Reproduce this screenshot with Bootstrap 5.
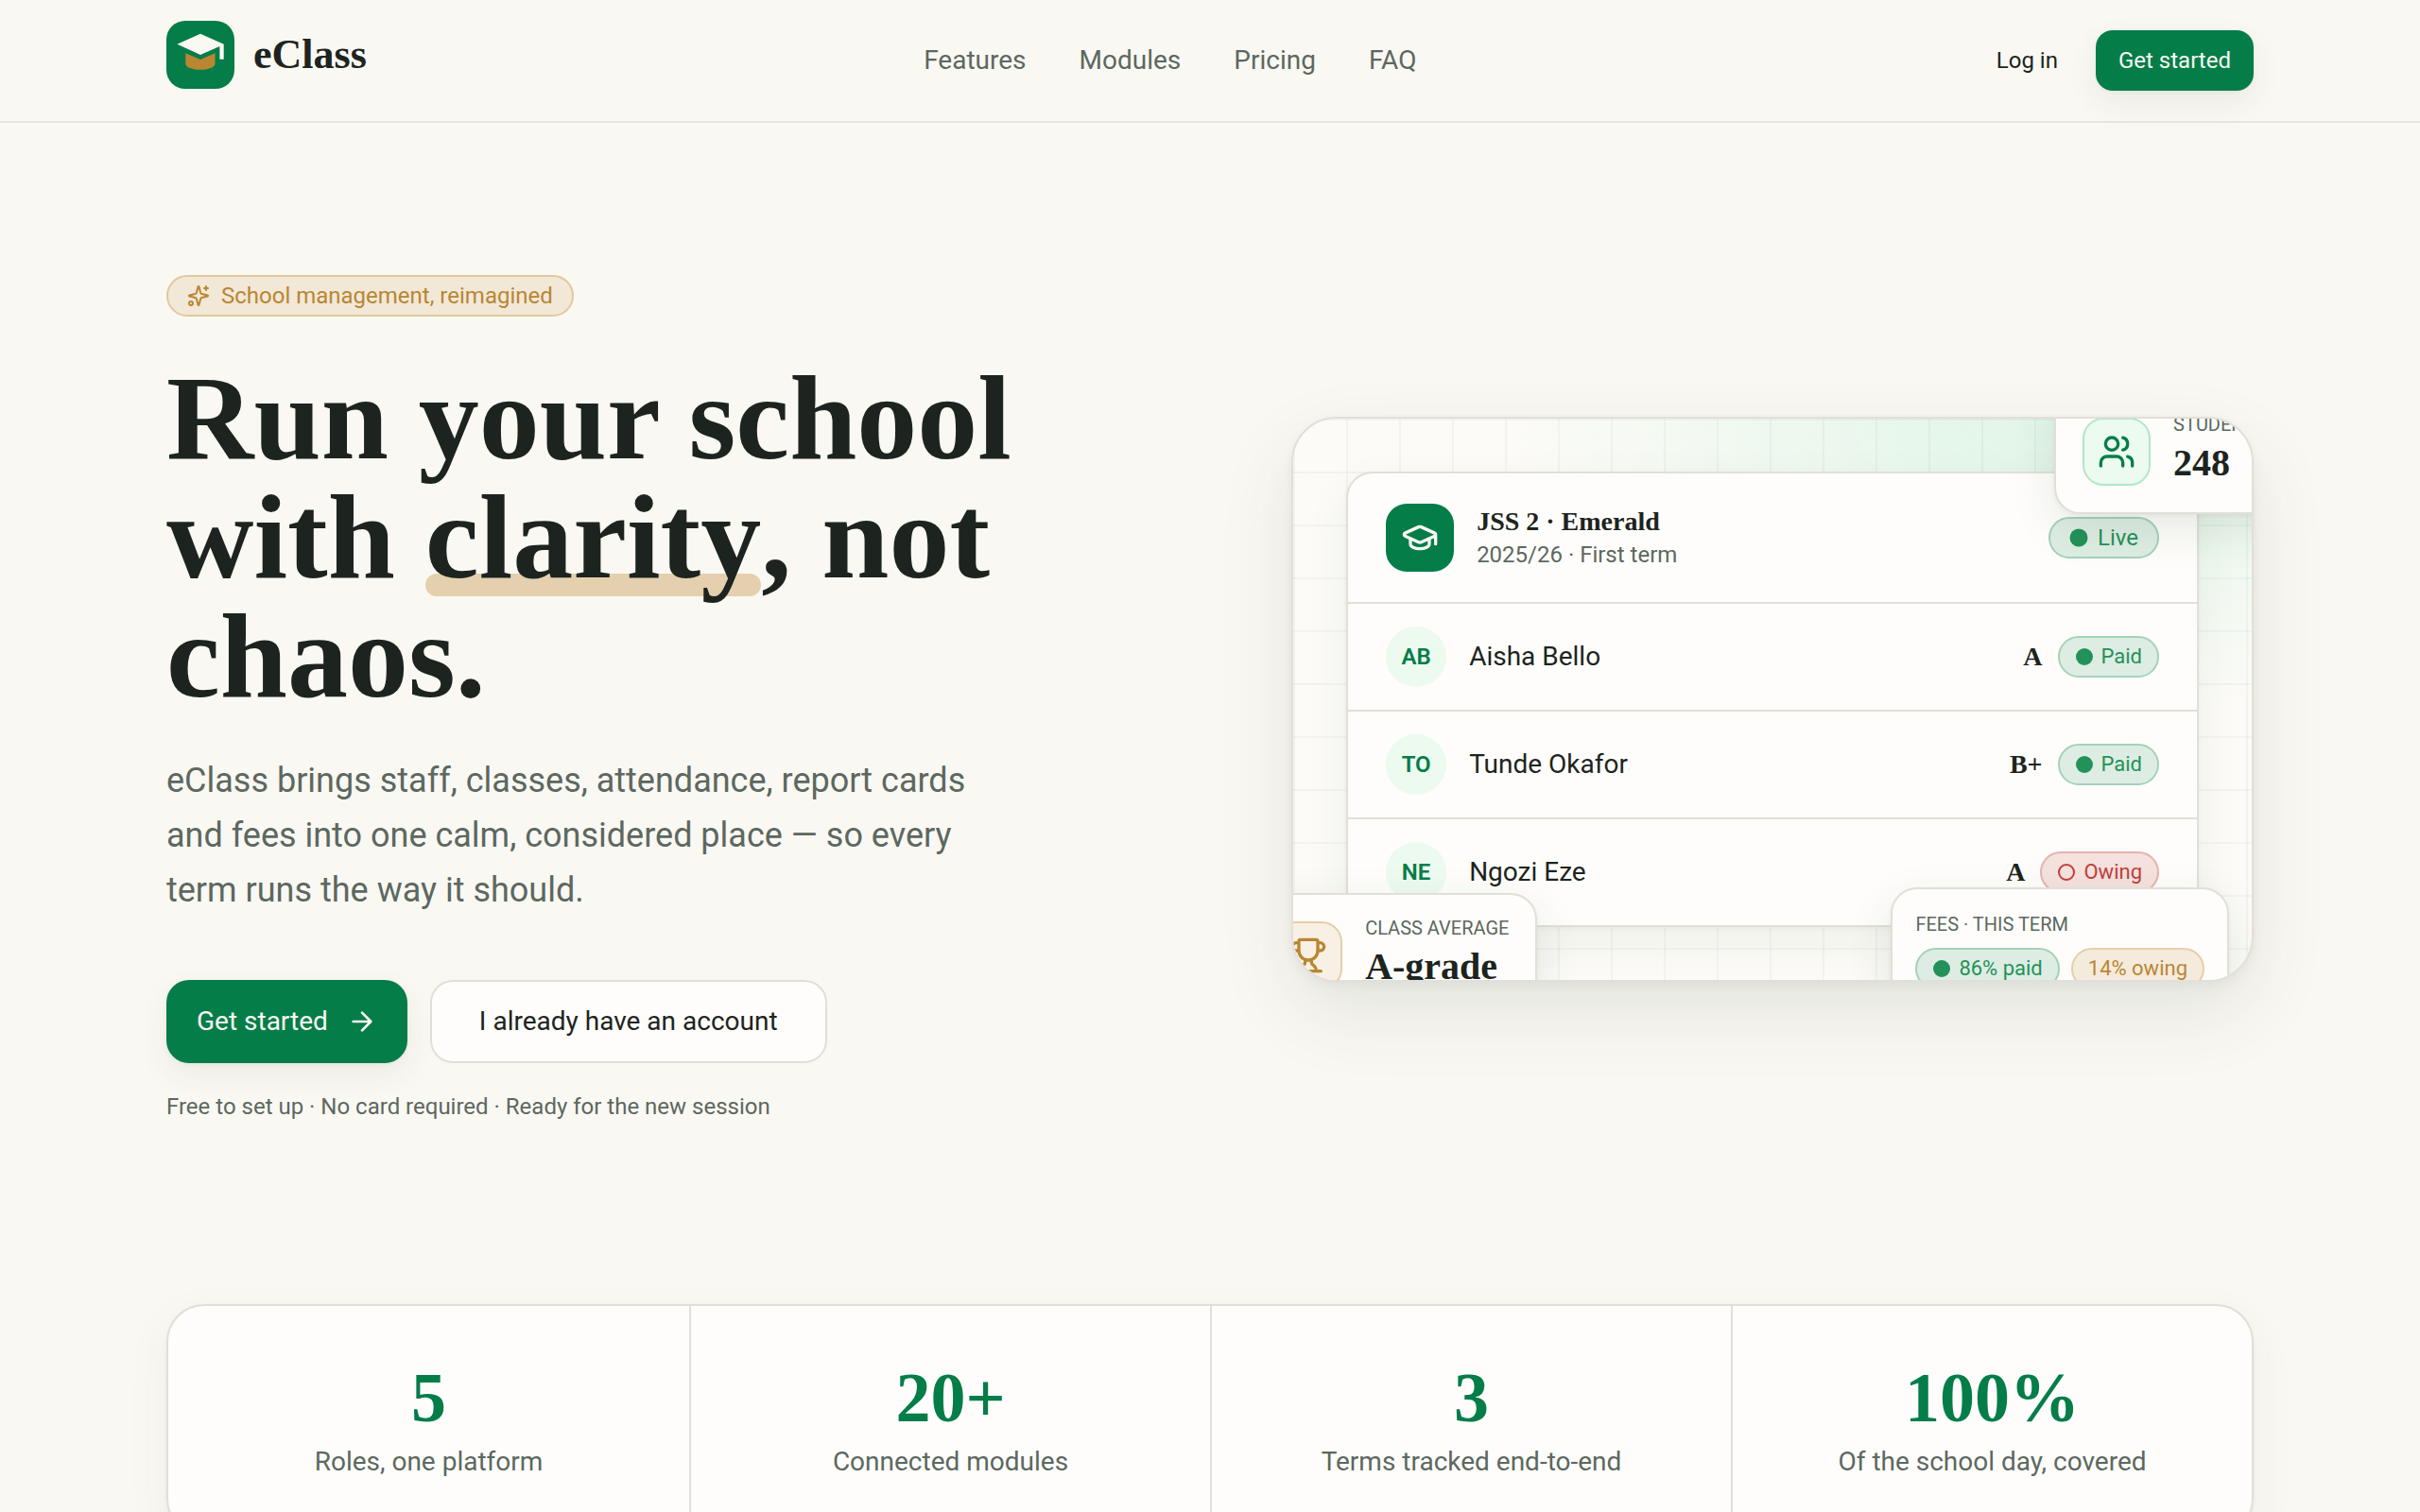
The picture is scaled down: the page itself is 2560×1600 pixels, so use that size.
<!DOCTYPE html>
<html lang="en">
<head>
<meta charset="utf-8">
<meta name="viewport" content="width=device-width, initial-scale=1">
<title>eClass</title>
<link href="https://cdn.jsdelivr.net/npm/bootstrap@5.3.0/dist/css/bootstrap.min.css" rel="stylesheet">
<style>
:root{--paper:#faf8f3;--surface:#fefdfb;--ink:#1d2420;--muted:#5c6860;--line:#e1dfd8;--brand:#047d48;--ok:#23915a;--gold:#b98632;--bad:#c0403a;--mid:450}
body{background:var(--paper);color:var(--ink);font-family:Roboto,"Liberation Sans",sans-serif;font-size:28px;line-height:42px;overflow-x:hidden}
.wrap{max-width:2304px;padding-left:48px;padding-right:48px}
.serif{font-family:"Liberation Serif",serif;font-weight:700}
.soft{color:var(--muted)}
svg{display:block;flex:none}
.ico{fill:none;stroke:currentColor;stroke-width:2;stroke-linecap:round;stroke-linejoin:round}
.topbar{border-bottom:2px solid #e8e6e0;padding:0}
.topbar .wrap{min-height:128px}
.brand{gap:20px;padding-bottom:12px;font-size:44px;line-height:72px;color:var(--ink);text-decoration:none}
.menu{gap:56px}
.menu a{color:var(--muted);font-weight:var(--mid);text-decoration:none}
.act{border:0;border-radius:18px;font-weight:var(--mid);font-size:24px;line-height:36px;padding:14px 24px}
.act-lg{border-radius:24px;font-size:28px;line-height:40px;padding:24px 32px;gap:20px}
.act-main,.act-main:hover{background:var(--brand);color:var(--paper);box-shadow:0 2px 4px rgba(29,60,42,.04),0 12px 32px rgba(29,60,42,.07)}
.act-plain,.act-plain:hover{color:var(--ink)}
.act-line,.act-line:hover{background:var(--surface);color:var(--ink);border:2px solid var(--line);padding:22px 50px}
.hero{padding-top:161px;padding-bottom:191px}
.tag{border:2px solid;border-radius:22px;font-weight:var(--mid);font-size:24px;line-height:40px;padding:0 20px;gap:10px;display:inline-flex;align-items:center;white-space:nowrap}
.tag-sm{font-size:22px;padding:0 16px;gap:8px}
.tag-ok{background:#deede3;border-color:#a4d2b9;color:var(--ok)}
.tag-bad{background:#f5e1de;border-color:#e5b3af;color:var(--bad)}
.tag-gold{background:#f5ebdd;border-color:#e4cfa8;color:var(--gold)}
.tag-intro{background:#f1e8d8;border-color:#e0c99c;color:var(--gold);gap:12px}
.headline{font-size:128px;line-height:126px;margin:44px 0 40px;max-width:960px}
.under{position:relative;z-index:0;display:inline-block}
.under::before{content:"";position:absolute;z-index:-1;left:0;right:0;bottom:0;height:24px;border-radius:12px;background:#e4d0ae}
.pitch{font-size:36px;line-height:58px;margin:0 0 66px;max-width:880px}
.small-note{font-size:24px;line-height:36px;margin:28px 0 0}
.preview{flex:0 0 46.1%;aspect-ratio:17/10;position:relative;overflow:hidden;border:2px solid var(--line);border-radius:48px;padding:56px;
background:linear-gradient(rgba(29,60,42,.04) 2px,transparent 2px) 0 0/56px 56px,linear-gradient(90deg,rgba(29,60,42,.04) 2px,transparent 2px) 0 0/56px 56px,radial-gradient(580px 320px at 80% 0,#e0f5e7,rgba(224,245,231,0)),#fcfbf7;
box-shadow:0 4px 12px rgba(29,60,42,.05),0 32px 80px rgba(29,60,42,.1)}
.sheet{background:var(--surface);border:2px solid var(--line);border-radius:28px;box-shadow:0 2px 4px rgba(29,60,42,.04),0 16px 48px rgba(29,60,42,.06)}
.sheet-head{padding:32px 40px;gap:24px}
.sheet-row{padding:24px 40px;gap:16px;border-top:2px solid var(--line)}
.sheet-title{font-size:28px;line-height:36px}
.sheet-sub{font-size:24px;line-height:34px}
.pupil{font-weight:var(--mid)}
.tile{width:72px;height:72px;border-radius:22px;display:flex;align-items:center;justify-content:center;flex:none}
.tile-brand{background:var(--brand);color:var(--paper)}
.tile-ok{background:#ecfaf0;border:2px solid #b0e8c4;color:var(--brand)}
.tile-gold{background:#f8f0e4;border:2px solid #e4cfa8;color:var(--gold)}
.face{width:64px;height:64px;border-radius:50%;background:#ecfaf0;color:var(--brand);font-size:24px;font-weight:600;display:flex;align-items:center;justify-content:center;margin-right:8px}
.floater{position:absolute;background:var(--surface);border:2px solid var(--line);border-radius:28px;padding:22px 28px;gap:24px;box-shadow:0 2px 4px rgba(29,60,42,.05),0 16px 48px rgba(29,60,42,.1);white-space:nowrap}
.at-top{top:-31px;right:-46px}
.at-left{left:-50px;bottom:-40px}
.at-right{right:24px;bottom:-36px;padding:24px}
.cap-label{font-size:20px;line-height:26px;font-weight:var(--mid);color:var(--muted)}
.cap-value{font-size:40px;line-height:44px;padding:6px 0 8px}
.stats{background:var(--surface);border:2px solid var(--line);border-radius:40px;box-shadow:0 2px 4px rgba(29,60,42,.04),0 16px 48px rgba(29,60,42,.06);margin-bottom:160px}
.stats>div{padding:56px 24px}
.stats>div+div{border-left:2px solid var(--line)}
.figure-num{font-size:74px;line-height:82px;color:var(--brand);margin-bottom:6px}
</style>
</head>
<body>
<header class="topbar">
  <div class="wrap container-fluid d-flex align-items-center justify-content-between">
    <a class="brand serif d-flex align-items-center" href="#">
      <svg width="72" height="72" viewBox="0 0 72 72" aria-hidden="true"><rect width="72" height="72" rx="20" fill="#047d48"/><path d="M36 13.7 60.7 24.7V40.7H56.4V27L36 36 11.4 24.7Z" fill="#faf8f3"/><path d="M20.3 34.3 36 41 51.5 34.3V45C51.5 49.6 44 51.8 36 51.8S20.3 49.6 20.3 45Z" fill="#b98632"/></svg>
      <span>eClass</span>
    </a>
    <nav class="menu d-flex" aria-label="Main">
      <a href="#features">Features</a><a href="#modules">Modules</a><a href="#pricing">Pricing</a><a href="#faq">FAQ</a>
    </nav>
    <div class="d-flex gap-3">
      <button type="button" class="btn act act-plain">Log in</button>
      <button type="button" class="btn act act-main">Get started</button>
    </div>
  </div>
</header>
<main>
  <section class="hero wrap container-fluid d-flex align-items-center justify-content-between">
    <div>
      <div class="d-flex"><span class="tag tag-intro"><svg class="ico" width="24" height="24" viewBox="0 0 24 24" aria-hidden="true"><path d="M9.94 15.5A2 2 0 0 0 8.5 14.06l-6.13-1.58a.5.5 0 0 1 0-.96L8.5 9.94A2 2 0 0 0 9.94 8.5l1.58-6.13a.5.5 0 0 1 .96 0L14.06 8.5a2 2 0 0 0 1.44 1.44l6.13 1.58a.5.5 0 0 1 0 .96l-6.13 1.58a2 2 0 0 0-1.44 1.44l-1.58 6.13a.5.5 0 0 1-.96 0zM20 2v4M22 4h-4"/><circle cx="4" cy="20" r="2"/></svg>School management, reimagined</span></div>
      <h1 class="headline serif">Run your school with <span class="under">clarity</span>, not chaos.</h1>
      <p class="pitch soft">eClass brings staff, classes, attendance, report cards and fees into one calm, considered place — so every term runs the way it should.</p>
      <div class="d-flex gap-4">
        <button type="button" class="btn act act-lg act-main d-flex align-items-center">Get started <svg class="ico" width="32" height="32" viewBox="0 0 24 24" aria-hidden="true"><path d="M5 12h14M12 5l7 7-7 7"/></svg></button>
        <button type="button" class="btn act act-lg act-line">I already have an account</button>
      </div>
      <p class="small-note soft">Free to set up · No card required · Ready for the new session</p>
    </div>
    <div class="preview">
      <div class="sheet">
        <div class="sheet-head d-flex align-items-center">
          <span class="tile tile-brand"><svg class="ico" width="40" height="40" viewBox="0 0 24 24" aria-hidden="true"><path d="M21.42 10.92a1 1 0 0 0-.02-1.84L12.83 5.18a2 2 0 0 0-1.66 0L2.6 9.08a1 1 0 0 0 0 1.83l8.57 3.91a2 2 0 0 0 1.66 0zM22 10v6M6 12.5V16a6 3 0 0 0 12 0v-3.5"/></svg></span>
          <div class="flex-grow-1"><div class="sheet-title serif">JSS 2 · Emerald</div><div class="sheet-sub soft">2025/26 · First term</div></div>
          <span class="tag tag-ok"><svg width="20" height="20" viewBox="0 0 20 20" aria-hidden="true"><circle cx="10" cy="10" r="9.5" fill="currentColor"/></svg>Live</span>
        </div>
        <div class="sheet-row d-flex align-items-center"><span class="face">AB</span><span class="flex-grow-1 pupil">Aisha Bello</span><span class="serif">A</span><span class="tag tag-sm tag-ok"><svg width="20" height="20" viewBox="0 0 20 20" aria-hidden="true"><circle cx="10" cy="10" r="9" fill="currentColor"/></svg>Paid</span></div>
        <div class="sheet-row d-flex align-items-center"><span class="face">TO</span><span class="flex-grow-1 pupil">Tunde Okafor</span><span class="serif">B+</span><span class="tag tag-sm tag-ok"><svg width="20" height="20" viewBox="0 0 20 20" aria-hidden="true"><circle cx="10" cy="10" r="9" fill="currentColor"/></svg>Paid</span></div>
        <div class="sheet-row d-flex align-items-center"><span class="face">NE</span><span class="flex-grow-1 pupil">Ngozi Eze</span><span class="serif">A</span><span class="tag tag-sm tag-bad"><svg width="20" height="20" viewBox="0 0 20 20" aria-hidden="true"><circle cx="10" cy="10" r="8" fill="none" stroke="currentColor" stroke-width="2"/></svg>Owing</span></div>
      </div>
      <div class="floater at-top d-flex align-items-center">
        <span class="tile tile-ok"><svg class="ico" width="40" height="40" viewBox="0 0 24 24" aria-hidden="true"><path d="M16 21v-2a4 4 0 0 0-4-4H6a4 4 0 0 0-4 4v2M22 21v-2a4 4 0 0 0-3-3.87M16 3.13a4 4 0 0 1 0 7.75"/><circle cx="9" cy="7" r="4"/></svg></span>
        <div><div class="cap-label">STUDENTS</div><div class="cap-value serif">248</div></div>
      </div>
      <div class="floater at-left d-flex align-items-center">
        <span class="tile tile-gold"><svg class="ico" width="40" height="40" viewBox="0 0 24 24" aria-hidden="true"><path d="M10 14.66v1.63a2 2 0 0 1-.98 1.7A5 5 0 0 0 7 21.98M14 14.66v1.63a2 2 0 0 0 .98 1.7A5 5 0 0 1 17 21.98M18 9h1.5a2.5 2.5 0 0 0 0-5H18M4 22h16M6 9a6 6 0 0 0 12 0V3a1 1 0 0 0-1-1H7a1 1 0 0 0-1 1zM6 9H4.5a2.5 2.5 0 0 1 0-5H6"/></svg></span>
        <div><div class="cap-label">CLASS AVERAGE</div><div class="cap-value serif">A-grade</div></div>
      </div>
      <div class="floater at-right">
        <div class="cap-label">FEES · THIS TERM</div>
        <div class="d-flex mt-2 pt-1"><span class="tag tag-sm tag-ok me-2"><svg width="20" height="20" viewBox="0 0 20 20" aria-hidden="true"><circle cx="10" cy="10" r="9" fill="currentColor"/></svg>86% paid</span><span class="tag tag-sm tag-gold ms-1">14% owing</span></div>
      </div>
    </div>
  </section>
  <section class="wrap container-fluid">
    <div class="stats row g-0 row-cols-4 text-center">
      <div class="col"><div class="figure-num serif">5</div><div class="soft">Roles, one platform</div></div>
      <div class="col"><div class="figure-num serif">20+</div><div class="soft">Connected modules</div></div>
      <div class="col"><div class="figure-num serif">3</div><div class="soft">Terms tracked end-to-end</div></div>
      <div class="col"><div class="figure-num serif">100%</div><div class="soft">Of the school day, covered</div></div>
    </div>
  </section>
</main>
<script src="https://cdn.jsdelivr.net/npm/bootstrap@5.3.0/dist/js/bootstrap.bundle.min.js"></script>
</body>
</html>
